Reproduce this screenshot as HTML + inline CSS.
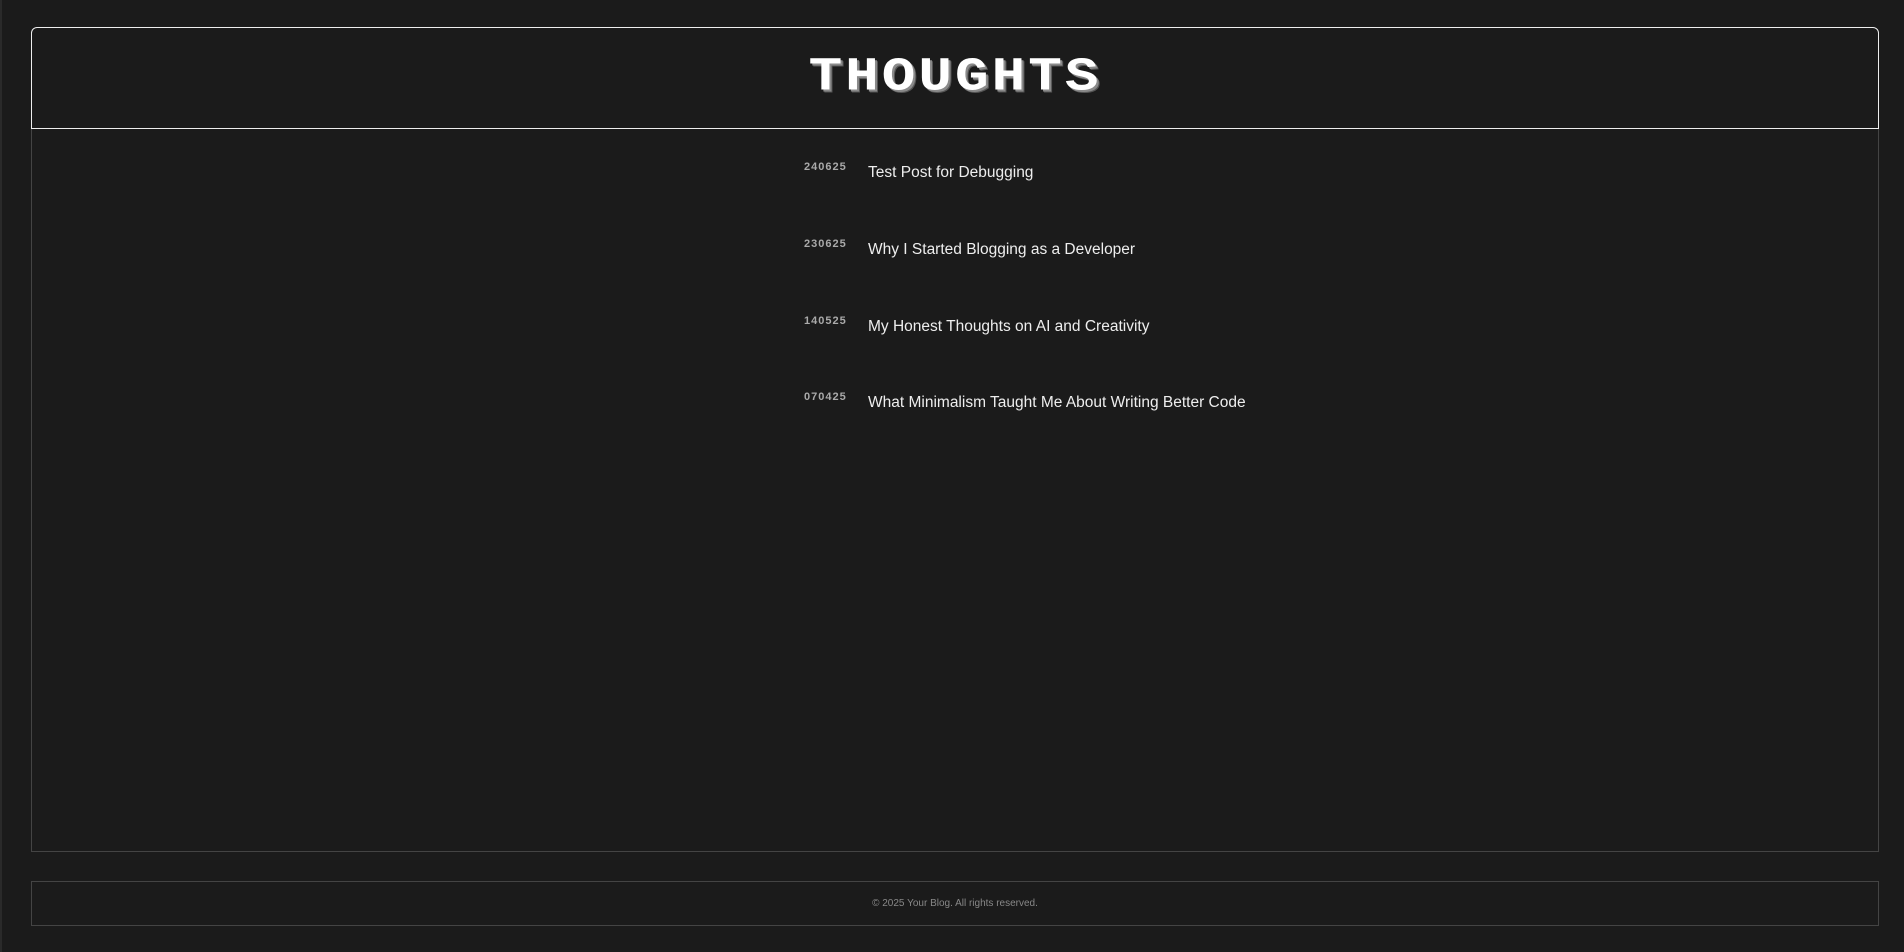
<!DOCTYPE html>
<html><head><meta charset="utf-8"><style>
html,body{margin:0;padding:0;background:#1b1b1b;width:1904px;height:952px;overflow:hidden;font-family:"Liberation Sans",sans-serif;}
body{border-left:2px solid #2a2a2a;box-sizing:border-box;position:relative}
.header{position:absolute;left:29px;top:27px;width:1848px;height:102px;box-sizing:border-box;border:1px solid #eee;border-radius:6px 6px 0 0;}
.title{position:absolute;left:0;right:0;top:21px;text-align:center;font-family:"Liberation Mono",monospace;font-weight:bold;font-size:56px;line-height:56px;color:#fff;letter-spacing:3px;text-shadow:2px 2px 0 #8a8a8a,3px 3px 0 #555;transform:scaleY(0.85);}
.main{position:absolute;left:29px;top:129px;width:1848px;height:723px;box-sizing:border-box;border:1px solid #444;border-top:none;}
.item{position:absolute;left:802px;}
.date{position:absolute;left:0;top:0;font-size:11px;color:#aaa;letter-spacing:1px;font-weight:bold;}
.t{position:absolute;left:64px;top:3px;white-space:nowrap;font-size:15.5px;color:#eee;}
.footer{position:absolute;left:29px;top:881px;width:1848px;height:45px;box-sizing:border-box;border:1px solid #444;text-align:center;font-size:10px;color:#888;line-height:43px;}
</style></head><body>
<div class="header"><div class="title">THOUGHTS</div></div>
<div class="main"></div>
<div class="item" style="top:161px"><span class="date">240625</span><span class="t">Test Post for Debugging</span></div>
<div class="item" style="top:238px"><span class="date">230625</span><span class="t">Why I Started Blogging as a Developer</span></div>
<div class="item" style="top:315px"><span class="date">140525</span><span class="t">My Honest Thoughts on AI and Creativity</span></div>
<div class="item" style="top:391px"><span class="date">070425</span><span class="t">What Minimalism Taught Me About Writing Better Code</span></div>
<div class="footer">© 2025 Your Blog. All rights reserved.</div>
</body></html>
